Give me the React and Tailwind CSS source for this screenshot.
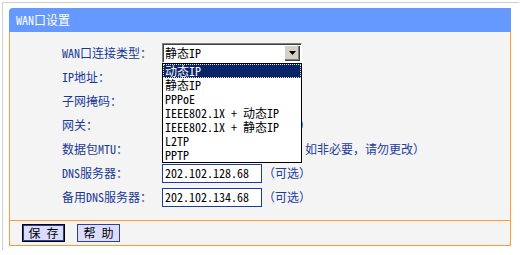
import React from 'react';

const font = { fontFamily: '"Noto Sans Mono CJK SC", "Noto Sans CJK SC", monospace' };

const options = ['动态IP', '静态IP', 'PPPoE', 'IEEE802.1X + 动态IP', 'IEEE802.1X + 静态IP', 'L2TP', 'PPTP'];

const Field = ({ value }) => (
  <div className="w-[100px] h-[19px] border border-[#1d3c9e] bg-white flex items-center pl-[2px] text-black leading-none">
    {value}
  </div>
);

const Optional = () => <span className="ml-[1px] text-[#1d3c9e]">（可选）</span>;

const Row = ({ label, children }) => (
  <div className="h-[24px] flex items-center">
    <div className="w-[100px] text-[#1a3894] whitespace-nowrap">{label}</div>
    <div className="flex items-center whitespace-nowrap">{children}</div>
  </div>
);

export default function App() {
  return (
    <div className="w-[520px] h-[255px] bg-white pl-[2px] pt-[2px] text-[12px] leading-none" style={font}>
      <div className="w-[517px] h-[248px] border-t border-l border-[#cfcfcf] pl-[6px] pt-[5px]">
        <div className="w-[502px]">
          {/* header */}
          <div className="h-[24px] bg-[#6699ff] rounded-tl-[4px] flex items-center pl-[7px] text-white">
            WAN口设置
          </div>

          {/* body */}
          <div className="bg-[#f4f4f4] border-l border-r border-[#ff9933]">
            <div className="relative pt-[9px] pb-[11px] pl-[52px]">
              <Row label="WAN口连接类型：">
                <div className="w-[140px] h-[20px] flex items-center border border-t-[#808080] border-l-[#808080] border-r-white border-b-white bg-white shadow-[inset_1px_1px_0_#404040]">
                  <span className="flex-1 pl-[2px] text-black">静态IP</span>
                  <div className="w-[16px] h-[16px] mr-[1px] bg-[#d4d0c8] flex items-center justify-center shadow-[inset_1px_1px_0_#ffffff,inset_-1px_-1px_0_#404040,inset_-2px_-2px_0_#808080]">
                    <svg width="7" height="4" viewBox="0 0 7 4">
                      <polygon points="0,0 7,0 3.5,4" fill="#000" />
                    </svg>
                  </div>
                </div>
              </Row>
              <Row label="IP地址：">
                <Field value="0.0.0.0" />
              </Row>
              <Row label="子网掩码：">
                <Field value="0.0.0.0" />
              </Row>
              <Row label="网关：">
                <Field value="0.0.0.0" />
                <Optional />
              </Row>
              <Row label="数据包MTU：">
                <Field value="1500" />
                <span className="ml-[43px] text-[#1d3c9e]">如非必要，请勿更改）</span>
              </Row>
              <Row label="DNS服务器：">
                <Field value="202.102.128.68" />
                <Optional />
              </Row>
              <Row label="备用DNS服务器：">
                <Field value="202.102.134.68" />
                <Optional />
              </Row>

              {/* open dropdown list */}
              <div className="absolute left-[152px] top-[31px] w-[140px] border border-black bg-white">
                {options.map((o, i) => (
                  <div
                    key={o}
                    className={
                      i === 0
                        ? 'h-[14px] flex items-center pl-[1px] bg-[#0a246a] text-white border border-dotted border-[#e8e8c8]'
                        : 'h-[14px] flex items-center pl-[2px] text-black'
                    }
                  >
                    {o}
                  </div>
                ))}
              </div>
            </div>

            {/* footer */}
            <div className="h-[26px] border-t border-b border-[#ff9933] flex items-center gap-[12px] pl-[12px]">
              <button className="w-[43px] h-[18px] bg-[#dcdcff] border border-black shadow-[inset_0_0_0_1px_#2a3f9f] text-black flex items-center justify-center leading-none">
                保 存
              </button>
              <button className="w-[43px] h-[18px] bg-[#dcdcff] border border-[#2a3f9f] text-black flex items-center justify-center leading-none">
                帮 助
              </button>
            </div>
          </div>
        </div>
      </div>
    </div>
  );
}
